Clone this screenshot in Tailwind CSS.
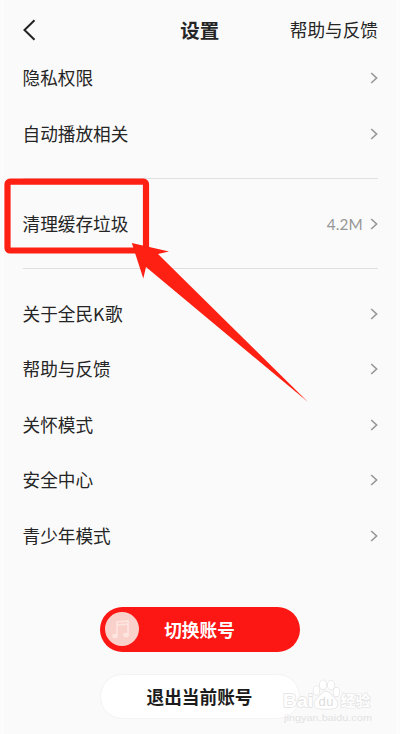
<!DOCTYPE html>
<html lang="zh-CN">
<head>
<meta charset="utf-8">
<meta name="viewport" content="width=device-width, initial-scale=1">
<title>设置</title>
<script src="https://cdn.jsdelivr.net/npm/@tailwindcss/browser@4"></script>
</head>
<body class="bg-[#fcfcfc]">
<svg class="hidden"><symbol id="chev" viewBox="0 0 8 12"><path d="M1.2 1 6.6 6 1.2 11" fill="none" stroke="#999" stroke-width="1.7"/></symbol></svg>
<main class="relative w-[400px] h-[734px] overflow-hidden border-x-4 border-[#fcfcfc] bg-[#fafafa] pl-[18.5px] pr-[18px] font-['Noto_Sans_CJK_SC',sans-serif] text-[17.65px] leading-[26px] text-[#252525]">
  <header class="-ml-px grid grid-cols-3 items-center h-[60px] whitespace-nowrap">
    <svg class="w-[14px] h-[22px]" viewBox="0 0 14 22" fill="none" stroke="#222" stroke-width="2"><path d="M12.5 1.2 2.5 11l10 9.8"/></svg>
    <h1 class="text-center text-[19.5px] font-bold">设置</h1>
    <a class="justify-self-end">帮助与反馈</a>
  </header>
  <section class="-mt-[9.6px] pb-[16.4px]">
    <div class="flex h-[55.6px] items-center justify-between"><span>隐私权限</span><svg class="w-2 h-3"><use href="#chev"/></svg></div>
    <div class="flex h-[55.6px] items-center justify-between"><span>自动播放相关</span><svg class="w-2 h-3"><use href="#chev"/></svg></div>
  </section>
  <section class="flex h-[90px] items-center justify-between border-t border-[#dfdfdf] pt-px">
    <span>清理缓存垃圾</span>
    <span class="flex items-center gap-[7px] font-[Lato,sans-serif] text-[15.3px] tracking-[0.2px] text-[#969696]">4.2M<svg class="w-2 h-3"><use href="#chev"/></svg></span>
  </section>
  <section class="border-t border-[#dfdfdf] pt-[16.9px]">
    <div class="flex h-[55.5px] items-center justify-between"><span>关于全民<span class="inline-block w-[12px]">K</span>歌</span><svg class="w-2 h-3"><use href="#chev"/></svg></div>
    <div class="flex h-[55.5px] items-center justify-between"><span>帮助与反馈</span><svg class="w-2 h-3"><use href="#chev"/></svg></div>
    <div class="flex h-[55.5px] items-center justify-between"><span>关怀模式</span><svg class="w-2 h-3"><use href="#chev"/></svg></div>
    <div class="flex h-[55.5px] items-center justify-between"><span>安全中心</span><svg class="w-2 h-3"><use href="#chev"/></svg></div>
    <div class="flex h-[55.5px] items-center justify-between"><span>青少年模式</span><svg class="w-2 h-3"><use href="#chev"/></svg></div>
  </section>
  <div class="-ml-[1.5px] mt-[44px] flex flex-col items-center gap-[22px] font-bold">
    <button class="relative h-[45px] w-[200px] rounded-full bg-[#fc1714] text-white">
      <svg class="absolute left-[5px] top-[5px] size-[34px]" viewBox="0 0 34 34" fill="none"><circle cx="17" cy="17" r="17" fill="#fad1ca"/><path d="M12 24V10l11-1v14M12 13l11-1" stroke="#fde5e0" stroke-width="1.6"/><ellipse cx="10" cy="24" rx="2.8" ry="2.2" fill="#fde5e0"/><ellipse cx="21" cy="23" rx="2.8" ry="2.2" fill="#fde5e0"/></svg>
      切换账号
    </button>
    <button class="h-[45px] w-[200px] rounded-full border border-[#f3f3f3] bg-white text-[#1c1c1c]">退出当前账号</button>
  </div>
  <svg class="absolute -left-1 top-0 h-[734px] w-[400px]" viewBox="0 0 400 734" fill="none">
    <rect x="7.5" y="181.7" width="138.5" height="68.8" rx="2.5" stroke="#ff2014" stroke-width="6.2"/>
    <path d="M131.8 243 169 251.5 158 254 308 402 146 267 143.3 278.5Z" fill="#ff2014"/>
    <g fill="#fff" stroke="#e2e2e2" stroke-width="1.4" paint-order="stroke">
      <text x="283" y="706.5" font-family="Liberation Sans, sans-serif" font-weight="bold" font-size="19" textLength="30" lengthAdjust="spacingAndGlyphs">Bai</text>
      <ellipse cx="316.5" cy="690.5" rx="3" ry="4.2"/><ellipse cx="323" cy="684.8" rx="3.2" ry="4.5"/><ellipse cx="331" cy="685" rx="3.2" ry="4.5"/><ellipse cx="336.5" cy="692" rx="3" ry="4.2"/>
      <path d="M326 691.5c3.2 0 5 3.2 7.2 5.6 3.2 3.4 5.2 5.4 3.8 9-1.3 3.1-4.5 2.6-11 2.6s-9.7.5-11-2.6c-1.4-3.6.6-5.6 3.8-9 2.2-2.4 4-5.6 7.2-5.6Z"/>
    </g>
    <text x="318.5" y="706" font-family="Liberation Sans, sans-serif" font-size="13" textLength="15" fill="#dcdcdc">du</text>
    <text x="340.5" y="706" font-family="Noto Sans CJK SC, sans-serif" font-weight="bold" font-size="15" textLength="30" fill="#fff" stroke="#e2e2e2" stroke-width="1.2" paint-order="stroke">经验</text>
    <text x="284" y="720.5" font-family="Liberation Sans, sans-serif" font-size="9.8" textLength="88" lengthAdjust="spacingAndGlyphs" fill="#e2e2e2">jingyan.baidu.com</text>
  </svg>
</main>
</body>
</html>
